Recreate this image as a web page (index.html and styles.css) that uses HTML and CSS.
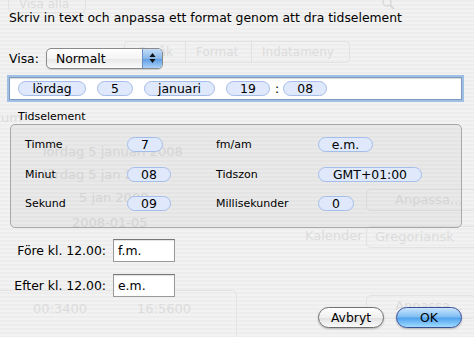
FILE: index.html
```html
<!doctype html>
<html lang="sv">
<head>
  <meta charset="UTF-8">
  <title>Anpassa tidsformat</title>
  <link rel="stylesheet" href="styles.css">
</head>
<body>
  <div class="window">
    <!-- faint window content behind the sheet -->
    <div class="ghost">
      <div class="g-btn g-visa">Visa alla</div>
      <svg class="g-search" width="14" height="14" viewBox="0 0 14 14"><circle cx="6" cy="5" r="4" fill="none" stroke="#d8d8d8" stroke-width="1.5"/><path d="M9 8l4 4" stroke="#d8d8d8" stroke-width="2"/></svg>
      <div class="g-tabs"><span>Språk</span><span>Format</span><span>Indatameny</span></div>
      <div class="g-text g-datum">Datum</div>
      <div class="g-text g-l1">lördag 5 januari 2008</div>
      <div class="g-text g-l2">lördag 5 jan 2008</div>
      <div class="g-text g-l3">5 jan 2008</div>
      <div class="g-text g-l4">2008-01-05</div>
      <div class="g-btn g-anp1">Anpassa...</div>
      <div class="g-text g-kal">Kalender</div>
      <div class="g-btn g-greg">Gregoriansk</div>
      <div class="g-text g-t1">00:3400</div>
      <div class="g-text g-t2">16:5600</div>
      <div class="g-box"></div>
      <div class="g-btn g-anp2">Anpassa...</div>
    </div>

    <div class="sheet">
      <p class="intro">Skriv in text och anpassa ett format genom att dra tidselement</p>

      <div class="show-row">
        <label>Visa:</label>
        <div class="popup">
          <span class="popup-value">Normalt</span>
          <span class="popup-arrows">
            <svg width="7" height="12" viewBox="0 0 7 12"><path d="M3.5 1L6.5 5H0.5Z" fill="#111"/><path d="M3.5 11L0.5 7H6.5Z" fill="#111"/></svg>
          </span>
        </div>
      </div>

      <div class="format-field">
        <span class="token w-day">lördag</span>
        <span class="token w-num">5</span>
        <span class="token w-month">januari</span>
        <span class="token w-hour">19</span>
        <span class="sep">:</span>
        <span class="token w-min">08</span>
      </div>

      <div class="group">
        <div class="group-title">Tidselement</div>
        <div class="group-box">
          <span class="el-label">Timme</span>
          <span><span class="token small t-7">7</span></span>
          <span class="el-label">fm/am</span>
          <span><span class="token small t-em">e.m.</span></span>

          <span class="el-label">Minut</span>
          <span><span class="token small t-08">08</span></span>
          <span class="el-label">Tidszon</span>
          <span><span class="token small t-gmt">GMT+01:00</span></span>

          <span class="el-label">Sekund</span>
          <span><span class="token small t-08">09</span></span>
          <span class="el-label">Millisekunder</span>
          <span><span class="token small t-0">0</span></span>
        </div>
      </div>

      <div class="ampm">
        <label>Före kl. 12.00:</label>
        <input class="field" type="text" value="f.m.">
        <label>Efter kl. 12.00:</label>
        <input class="field" type="text" value="e.m.">
      </div>

      <div class="actions">
        <button class="btn">Avbryt</button>
        <button class="btn default">OK</button>
      </div>
    </div>
  </div>
</body>
</html>
```

FILE: styles.css
```css
* {
  margin: 0;
  padding: 0;
  box-sizing: border-box;
}
body {
  font-family: 'DejaVu Sans', 'Liberation Sans', sans-serif;
  color: #000;
  background: #ececec;
}
.window {
  position: relative;
  width: 474px;
  height: 337px;
  overflow: hidden;
  background: repeating-linear-gradient(to bottom, #ededed 0, #ededed 2px, #f2f2f2 2px, #f2f2f2 4px);
}

/* ghost content */
.ghost {
  position: absolute;
  inset: 0;
  color: #dcdcdc;
  font-size: 12px;
}
.ghost > * {
  position: absolute;
}
.g-btn {
  border: 1px solid #e2e2e2;
  border-radius: 5px;
  padding: 2px 10px;
  font-size: 12px;
}
.g-visa { left: 8px; top: -6px; width: 78px; height: 19px; }
.g-search { left: 381px; top: -3px; }
.g-tabs {
  left: 124px; top: 41px;
  display: flex;
  border: 1px solid #e2e2e2;
  border-radius: 4px;
}
.g-tabs span { padding: 3px 10px; border-left: 1px solid #e2e2e2; }
.g-tabs span:first-child { border-left: none; width: 60px; text-align: right; padding-right: 12px; }
.g-tabs span:nth-child(2) { width: 66px; }
.g-tabs span:nth-child(3) { width: 98px; }
.g-datum { left: -22px; top: 110px; font-size: 13px; }
.g-l1 { left: 43px; top: 144px; font-size: 13px; }
.g-l2 { left: 43px; top: 167px; font-size: 13px; }
.g-l3 { left: 79px; top: 190px; font-size: 13px; }
.g-l4 { left: 72px; top: 215px; font-size: 13px; }
.g-anp1 { left: 366px; top: 189px; width: 110px; height: 22px; font-size: 13px; padding-left: 28px; }
.g-kal { left: 305px; top: 228px; font-size: 13px; }
.g-greg { left: 366px; top: 226px; width: 120px; height: 22px; font-size: 13px; padding-left: 8px; }
.g-t1 { left: 33px; top: 301px; font-size: 13px; }
.g-t2 { left: 137px; top: 301px; font-size: 13px; }
.g-box { left: -10px; top: 290px; width: 247px; height: 60px; border: 1px solid #e4e4e4; border-radius: 5px; }
.g-anp2 { left: 366px; top: 295px; width: 110px; height: 24px; font-size: 13px; padding-left: 28px; }

/* sheet */
.sheet {
  position: relative;
  padding: 10px 12px 0 9px;
  font-size: 12.4px;
}
.intro {
  line-height: 16px;
  margin-bottom: 21px;
}
.show-row {
  display: flex;
  align-items: center;
  gap: 7px;
  height: 22px;
}
.popup {
  display: flex;
  width: 117px;
  height: 21px;
  border: 1px solid #8a8a8a;
  border-radius: 5px;
  overflow: hidden;
  background: linear-gradient(to bottom, #ffffff 0%, #f4f4f4 50%, #e6e6e6 51%, #fbfbfb 100%);
  box-shadow: 0 1px 1px rgba(0,0,0,0.15);
}
.popup-value {
  flex: 1;
  padding-left: 9px;
  line-height: 19px;
}
.popup-arrows {
  width: 20px;
  display: flex;
  align-items: center;
  justify-content: center;
  border-left: 1px solid #6a8fc4;
  background: linear-gradient(to bottom, #c2dcf6 0%, #88b8ea 50%, #5d9ae0 51%, #a8d2fa 100%);
}
.format-field {
  display: flex;
  align-items: center;
  gap: 11px;
  margin-top: 8px;
  width: 453px;
  height: 23px;
  border: 1px solid #7e9bbf;
  background: #fff;
  padding-left: 8px;
  box-shadow: 0 0 0 2px #9fbfe4, inset 0 1px 1px rgba(0,0,0,0.15);
}
.token {
  display: inline-block;
  height: 15px;
  line-height: 13px;
  text-align: center;
  background: #dfe9fb;
  border: 1px solid #a5bde9;
  border-radius: 8px;
}
.w-day { width: 68px; }
.w-num { width: 36px; }
.w-month { width: 71px; }
.w-hour { width: 44px; }
.w-min { width: 44px; margin-left: -7px; }
.sep { margin-left: -6px; }

/* element group */
.group {
  margin-top: 10px;
}
.group-title {
  font-size: 11px;
  padding-left: 9px;
  line-height: 13px;
  margin-bottom: 1px;
}
.group-box {
  margin-left: 1px;
  width: 452px;
  height: 104px;
  border: 1px solid #a8a8a8;
  border-radius: 5px;
  background: rgba(0,0,0,0.035);
  display: grid;
  grid-template-columns: 102px 89px 102px auto;
  grid-auto-rows: 29.5px;
  align-items: center;
  padding: 5px 0 0 14px;
}
.el-label {
  font-size: 11px;
}
.token.small {
  font-size: 12.4px;
}
.t-7 { width: 36px; }
.t-08 { width: 44px; }
.t-em { width: 55px; }
.t-gmt { width: 104px; }
.t-0 { width: 36px; }

/* am / pm */
.ampm {
  display: grid;
  grid-template-columns: 97px 62px;
  column-gap: 7px;
  row-gap: 12px;
  align-items: center;
  margin-top: 11px;
}
.ampm label {
  text-align: right;
}
.field {
  width: 62px;
  height: 23px;
  border: 1px solid #9a9a9a;
  border-top-color: #777;
  background: #fff;
  font: inherit;
  padding: 0 0 0 4px;
  box-shadow: inset 0 1px 1px rgba(0,0,0,0.12);
}

/* buttons */
.actions {
  display: flex;
  justify-content: flex-end;
  gap: 12px;
  margin-top: 10px;
}
.btn {
  width: 66px;
  height: 21px;
  font: inherit;
  font-size: 12.4px;
  border-radius: 11px;
  border: 1px solid #6f6f6f;
  background: linear-gradient(to bottom, #fefefe 0%, #f0f0f0 50%, #e0e0e0 51%, #fafafa 100%);
  box-shadow: 0 1px 2px rgba(0,0,0,0.25);
}
.btn.default {
  border-color: #3b4f99;
  background: linear-gradient(to bottom, #cbe6fc 0%, #7cbcf3 48%, #4fa1ee 52%, #9fdcff 100%);
}
```
